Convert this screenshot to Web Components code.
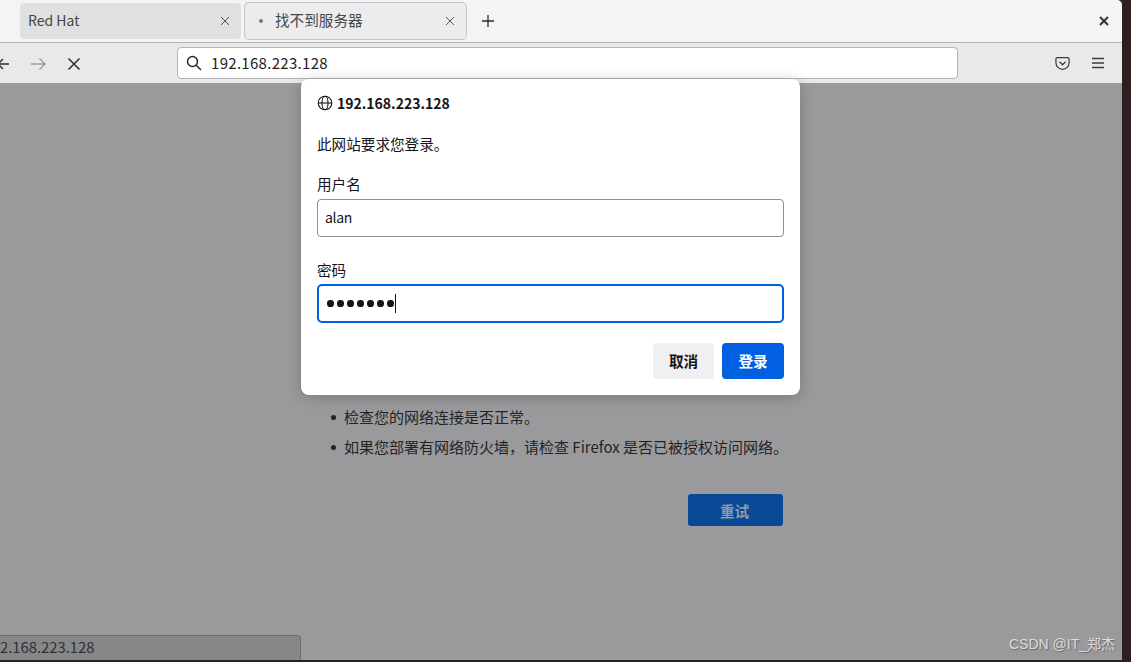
<!DOCTYPE html>
<html lang="zh">
<head>
<meta charset="utf-8">
<title>找不到服务器</title>
<style>
  html, body { margin: 0; height: 100%; overflow: hidden; background: #2c1f20; }
  body { font-family: "Noto Sans CJK SC", "Noto Sans", sans-serif; }
</style>
</head>
<body>
<browser-window>
  <tab-strip slot="tabs">
    <browser-tab label="Red Hat"></browser-tab>
    <browser-tab label="找不到服务器" selected loading></browser-tab>
  </tab-strip>
  <nav-toolbar slot="toolbar" url="192.168.223.128"></nav-toolbar>
  <error-page slot="page">
    <li>检查您的网络连接是否正常。</li>
    <li>如果您部署有网络防火墙，请检查 Firefox 是否已被授权访问网络。</li>
  </error-page>
  <auth-dialog slot="overlay" host-name="192.168.223.128" user="alan"></auth-dialog>
  <status-panel slot="overlay">2.168.223.128</status-panel>
  <water-mark slot="overlay">CSDN @IT_郑杰</water-mark>
</browser-window>
<script>
class BrowserWindow extends HTMLElement {
  constructor() {
    super();
    this.attachShadow({ mode: 'open' });
    this.shadowRoot.innerHTML = `
      <style>
        :host {
          display: flex;
          flex-direction: column;
          position: relative;
          width: 1122px;
          height: 660px;
          overflow: hidden;
          border-top-right-radius: 5px;
          background: #9a9a9c;
        }
      </style>
      <slot name="tabs"></slot>
      <slot name="toolbar"></slot>
      <slot name="page"></slot>
      <slot name="overlay"></slot>
    `;
  }
}
customElements.define('browser-window', BrowserWindow);

class TabStrip extends HTMLElement {
  constructor() {
    super();
    this.attachShadow({ mode: 'open' });
    this.shadowRoot.innerHTML = `
      <style>
        :host {
          display: flex;
          align-items: center;
          box-sizing: border-box;
          height: 43px;
          padding: 0 12px 1px 20px;
          gap: 3px;
          background: #f4f4f4;
          border-bottom: 1px solid #b4b4b3;
        }
        .new { margin-left: 11px; width: 16px; height: 16px; }
        .spacer { flex: 1; }
        .close { width: 12px; height: 12px; }
      </style>
      <slot></slot>
      <svg class="new" viewBox="0 0 16 16" fill="none" stroke="#2b2b30" stroke-width="1.3"><path d="M8 2v12M2 8h12"/></svg>
      <div class="spacer"></div>
      <svg class="close" viewBox="0 0 12 12" fill="none" stroke="#2e3436" stroke-width="2"><path d="M2 2l8 8M10 2l-8 8"/></svg>
    `;
  }
}
customElements.define('tab-strip', TabStrip);

class BrowserTab extends HTMLElement {
  constructor() {
    super();
    this.attachShadow({ mode: 'open' });
    const dot = this.hasAttribute('loading') ? '<i class="dot"></i>' : '';
    this.shadowRoot.innerHTML = `
      <style>
        :host {
          display: flex;
          align-items: center;
          box-sizing: border-box;
          width: 221px;
          height: 36px;
          padding: 0 11px 0 8px;
          border-radius: 4px;
          background: #dfe0e0;
          color: #45454a;
          font-size: 14px;
        }
        :host([selected]) {
          background: #ececec;
          box-shadow: 0 0 0 1px #c5c5cc;
          margin-left: 1px;
          padding-left: 14px;
          font-size: 14.6px;
        }
        .dot { width: 4px; height: 4px; border-radius: 50%; background: #77777c; margin-right: 12px; }
        .label { flex: 1; white-space: nowrap; padding-bottom: 2px; }
        svg { width: 10px; height: 10px; }
      </style>
      ${dot}<span class="label">${this.getAttribute('label')}</span>
      <svg viewBox="0 0 10 10" fill="none" stroke="#55555a" stroke-width="1"><path d="M1 1l8 8M9 1l-8 8"/></svg>
    `;
  }
}
customElements.define('browser-tab', BrowserTab);

class NavToolbar extends HTMLElement {
  constructor() {
    super();
    this.attachShadow({ mode: 'open' });
    this.shadowRoot.innerHTML = `
      <style>
        :host {
          display: flex;
          align-items: center;
          box-sizing: border-box;
          height: 40px;
          padding: 0 16px 0 0;
          background: #e9e9e7;
          color: #2b2b30;
        }
        .back { width: 10px; height: 16px; margin-top: 1px; }
        .forward { width: 16px; height: 16px; margin-left: 20px; margin-top: 1px; }
        .stop { width: 14px; height: 14px; margin-left: 21px; margin-top: 1px; }
        .url {
          display: flex;
          align-items: center;
          box-sizing: border-box;
          width: 781px;
          height: 32px;
          margin-left: 96px;
          padding: 0 8px;
          gap: 9px;
          background: #fff;
          border: 1px solid #b5b5b5;
          border-radius: 4px;
          font-size: 15px;
          letter-spacing: .3px;
          color: #1d1d22;
        }
        .url svg { width: 16px; height: 16px; flex: none; }
        .url span { padding-bottom: 2px; }
        .pocket { width: 15px; height: 15px; margin-left: 97px; }
        .menu { width: 14px; height: 14px; margin-left: 21px; }
      </style>
      <svg class="back" viewBox="0 0 10 16" fill="none" stroke="#2b2b30" stroke-width="1.3"><path d="M3 3L-2 8l5 5M-2 8h11"/></svg>
      <svg class="forward" viewBox="0 0 16 16" fill="none" stroke="#9b9b9e" stroke-width="1.3"><path d="M1 8h14M9.500 2.500L15 8l-5.500 5.500"/></svg>
      <svg class="stop" viewBox="0 0 14 14" fill="none" stroke="#2b2b30" stroke-width="1.5"><path d="M1.500 1.500l11 11M12.500 1.500l-11 11"/></svg>
      <div class="url">
        <svg viewBox="0 0 16 16" fill="none" stroke="#2b2b30" stroke-width="1.5"><circle cx="6.500" cy="6.500" r="5"/><path d="M10 10l5 5"/></svg>
        <span>${this.getAttribute('url')}</span>
      </div>
      <svg class="pocket" viewBox="0 0 16 16" fill="none" stroke="#3c3c41" stroke-width="1.300"><path d="M2.500 1.700h11a1.500 1.500 0 0 1 1.500 1.500v4a7 7 0 0 1-14 0v-4a1.500 1.500 0 0 1 1.500-1.500z"/><path d="M4.800 6.200L8 9.300l3.200-3.100" stroke-width="1.400"/></svg>
      <svg class="menu" viewBox="0 0 14 14" fill="none" stroke="#3c3c41" stroke-width="1.300"><path d="M1 2.500h12M1 7h12M1 11.500h12"/></svg>
    `;
  }
}
customElements.define('nav-toolbar', NavToolbar);

class ErrorPage extends HTMLElement {
  constructor() {
    super();
    this.attachShadow({ mode: 'open' });
    this.shadowRoot.innerHTML = `
      <style>
        :host {
          display: flex;
          flex-direction: column;
          flex: 1;
          box-sizing: border-box;
          padding: 323px 339px 0 301px;
          background: #9a9a9c;
          color: #232326;
          font-size: 15px;
          line-height: 22px;
        }
        ul { margin: 0; padding: 0 0 0 43px; display: flex; flex-direction: column; gap: 8px; white-space: nowrap; list-style: none; }
        ::slotted(li) { position: relative; }
        ::slotted(li)::before {
          content: "";
          position: absolute;
          left: -13.500px;
          top: 9px;
          width: 5px;
          height: 5px;
          border-radius: 50%;
          background: #232326;
        }
        button {
          align-self: flex-end;
          width: 95px;
          height: 32px;
          margin-top: 36px;
          padding: 0 2px 0 0;
          border: 0;
          border-radius: 3px;
          background: #0b4896;
          color: #8f9aa8;
          font: 700 14.6px "Noto Sans CJK SC", "Noto Sans", sans-serif;
        }
      </style>
      <ul><slot></slot></ul>
      <button>重试</button>
    `;
  }
}
customElements.define('error-page', ErrorPage);

class AuthDialog extends HTMLElement {
  constructor() {
    super();
    this.attachShadow({ mode: 'open' });
    this.shadowRoot.innerHTML = `
      <style>
        :host {
          display: flex;
          flex-direction: column;
          position: absolute;
          left: 301px;
          top: 79px;
          box-sizing: border-box;
          width: 499px;
          height: 316px;
          padding: 14px 16px 16px;
          border-radius: 8px;
          background: #fff;
          color: #15141a;
          font-size: 14.6px;
          line-height: 20px;
          box-shadow: 0 2px 14px rgba(0,0,0,.22);
        }
        .title { display: flex; align-items: center; gap: 4px; font-weight: 700; font-size: 14px; }
        .title svg { width: 16px; height: 16px; }
        .lead { margin-top: 21px; }
        label { display: block; margin-top: 20px; }
        .field {
          display: flex;
          align-items: center;
          box-sizing: border-box;
          height: 38px;
          margin-top: 5px;
          padding: 0 7px;
          border: 1px solid #8f8f9d;
          border-radius: 4px;
        }
        .field span.user { font-size: 14px; letter-spacing: -.3px; padding-bottom: 2px; }
        label.pw { margin-top: 23px; }
        .field.focus { height: 39px; margin-top: 4px; border: 2px solid #0060df; border-radius: 5px; padding: 0 8px; }
        .dots { display: flex; gap: 3.300px; align-items: center; }
        .dots i { width: 6.700px; height: 6.700px; border-radius: 50%; background: #15141a; }
        .caret { width: 1px; height: 19px; background: #15141a; margin-left: 1px; }
        .actions { display: flex; justify-content: flex-end; gap: 8px; margin-top: 20px; }
        button {
          height: 36px;
          padding: 0 0 2px;
          border: 0;
          border-radius: 4px;
          font: 700 14.6px "Noto Sans CJK SC", "Noto Sans", sans-serif;
        }
        .cancel { width: 61px; background: #f0f0f2; color: #15141a; }
        .ok { width: 62px; background: #0060df; color: #fff; }
      </style>
      <div class="title">
        <svg viewBox="0 0 16 16" fill="none" stroke="#15141a" stroke-width="1.100"><circle cx="8" cy="8" r="6.800"/><ellipse cx="8" cy="8" rx="3" ry="6.800"/><path d="M1.200 8h13.600"/></svg>
        <span>${this.getAttribute('host-name')}</span>
      </div>
      <div class="lead">此网站要求您登录。</div>
      <label>用户名</label>
      <div class="field"><span class="user">${this.getAttribute('user')}</span></div>
      <label class="pw">密码</label>
      <div class="field focus"><span class="dots"><i></i><i></i><i></i><i></i><i></i><i></i><i></i></span><span class="caret"></span></div>
      <div class="actions">
        <button class="cancel">取消</button>
        <button class="ok">登录</button>
      </div>
    `;
  }
}
customElements.define('auth-dialog', AuthDialog);

class StatusPanel extends HTMLElement {
  constructor() {
    super();
    this.attachShadow({ mode: 'open' });
    this.shadowRoot.innerHTML = `
      <style>
        :host {
          display: flex;
          align-items: center;
          position: absolute;
          left: 0;
          bottom: 0;
          box-sizing: border-box;
          width: 301px;
          height: 25px;
          padding-bottom: 3px;
          background: #87878a;
          border: 1px solid #6f6f72;
          border-width: 1px 1px 0 0;
          border-top-right-radius: 4px;
          color: #303033;
          font-size: 14.8px;
          white-space: nowrap;
        }
      </style>
      <slot></slot>
    `;
  }
}
customElements.define('status-panel', StatusPanel);

class WaterMark extends HTMLElement {
  constructor() {
    super();
    this.attachShadow({ mode: 'open' });
    this.shadowRoot.innerHTML = `
      <style>
        :host {
          display: block;
          position: absolute;
          right: 7px;
          bottom: 7px;
          color: #dcdcdc;
          font: 14px "Liberation Sans", "Noto Sans CJK SC", sans-serif;
          text-shadow: 1px 1px 1px rgba(70,70,70,.6);
          white-space: nowrap;
        }
      </style>
      <slot></slot>
    `;
  }
}
customElements.define('water-mark', WaterMark);
</script>
</body>
</html>
